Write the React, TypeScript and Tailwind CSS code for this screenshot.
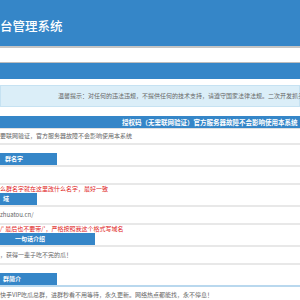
import React from 'react';

const blue = 'bg-[#3586c8]';

const Tab = ({ label, w, pl }: { label: string; w: string; pl: string }) => (
  <div className={`${blue} ${w} ${pl} h-[12px] flex items-center text-[6px] font-bold text-white leading-none`}>
    {label}
  </div>
);

const Field = ({ value, last }: { value: string; last?: boolean }) => (
  <div
    className={`h-[20px] flex items-center border-t-2 border-b-2 text-[6px] text-[#666] leading-none ${
      last ? 'border-t-[#b9d8ee] border-b-transparent' : 'border-[#e8e8e8]'
    }`}
  >
    {value}
  </div>
);

const Hint = ({ text }: { text: string }) => (
  <div className="h-[8px] flex items-center text-[6px] text-[#e02020] leading-none whitespace-nowrap">{text}</div>
);

export default function App() {
  return (
    <div
      className="w-[300px] h-[300px] overflow-hidden bg-white"
      style={{ fontFamily: '"Noto Sans CJK SC", "Noto Sans", sans-serif' }}
    >
      {/* header */}
      <div className={`${blue} h-[46px] flex items-center pt-[6px]`}>
        <span className="text-[12.5px] text-white font-medium leading-none">台管理系统</span>
      </div>
      <div className="h-[17px] border-t-2 border-t-[#c4c4c4] border-b border-b-[#bdbdbd] bg-white" />
      <div className={`${blue} h-[16px]`} />

      {/* notice */}
      <div className="mt-[6px] h-[22px] border border-[#c6e2f2] bg-[#dbeef8] flex items-center pl-[57px] whitespace-nowrap text-[6px] text-[#666] leading-none">
        温馨提示：对任何的违法违规，不提供任何的技术支持，请遵守国家法律法规。二次开发抓头网
      </div>

      <div className={`${blue} mt-[9px] h-[12px] flex items-center pl-[122px] whitespace-nowrap text-[6.5px] font-bold text-white leading-none`}>
        授权码（无需联网验证）官方服务器故障不会影响使用本系统
      </div>
      <div className="h-[17px] border-t border-t-[#e0e0e0] border-b-2 border-b-[#e8e8e8] pt-[3px] text-[6px] text-[#666] leading-[8px] whitespace-nowrap">
        要联网验证，官方服务器故障不会影响使用本系统
      </div>

      <div className="mt-[8px]">
        <Tab label="群名字" w="w-[57px]" pl="pl-[5px]" />
        <Field value="" />
        <Hint text="么群名字就在这里改什么名字，最好一致" />
        <Tab label="域" w="w-[37px]" pl="pl-[3px]" />
        <Field value="zhuatou.cn/" />
        <Hint text="/' 最后也不要带/'，严格按照我这个格式写域名" />
        <Tab label="一句话介绍" w="w-[95px]" pl="pl-[15px]" />
        <Field value="，获得一辈子吃不完的瓜！" />
        <div className="h-[8px]" />
        <Tab label="群简介" w="w-[57px]" pl="pl-[3px]" />
        <Field value="快手VIP吃瓜总群，进群秒看不用等待，永久更新。网络热点都能找，永不停息！" last />
      </div>
    </div>
  );
}
